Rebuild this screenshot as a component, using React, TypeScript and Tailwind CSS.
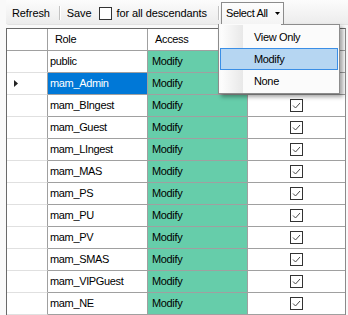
import React from "react";

const rows = [
  "public",
  "mam_Admin",
  "mam_BIngest",
  "mam_Guest",
  "mam_LIngest",
  "mam_MAS",
  "mam_PS",
  "mam_PU",
  "mam_PV",
  "mam_SMAS",
  "mam_VIPGuest",
  "mam_NE",
];

function CheckBox({ checked }: { checked: boolean }) {
  return (
    <div className="shrink-0 w-[13px] h-[13px] border border-[#333333] bg-white flex items-center justify-center">
      {checked && (
        <svg width="11" height="11" viewBox="0 0 11 11">
          <polyline points="2,5.5 4.5,8 9,3" fill="none" stroke="#4a4a4a" strokeWidth="1" />
        </svg>
      )}
    </div>
  );
}

export default function App() {
  return (
    <div
      className="relative w-[348px] h-[315px] overflow-hidden bg-[#f9f9f9] text-[11px] tracking-[-0.35px] text-black whitespace-nowrap"
      style={{ fontFamily: '"Liberation Sans", Arial, sans-serif' }}
    >
      {/* Toolbar */}
      <div className="ml-[6px] h-[25px] flex items-center pt-[2px] bg-gradient-to-b from-[#fcfcfc] to-[#ececec] rounded-bl-[3px] border-b border-[#e2e2e2] tracking-[-0.1px]">
        <span className="shrink-0 ml-[6px]">Refresh</span>
        <div className="shrink-0 ml-[9px] flex h-[14px]">
          <div className="w-px bg-[#c2c2c2]" />
          <div className="w-px bg-white" />
        </div>
        <span className="shrink-0 ml-[6px]">Save</span>
        <div className="shrink-0 ml-[7px]">
          <CheckBox checked={false} />
        </div>
        <span className="shrink-0 ml-[5px]">for all descendants</span>
        <div className="shrink-0 ml-[11px] flex h-[14px]">
          <div className="w-px bg-[#c2c2c2]" />
          <div className="w-px bg-white" />
        </div>
        <div className="shrink-0 ml-px self-end w-[63px] h-[22px] border-l border-t border-r border-[#8c8c8c] bg-gradient-to-b from-[#fdfdfd] to-[#f4f4f4] flex items-center pl-[4px] pr-[3px] pb-[1px] relative z-20 tracking-[-0.35px]">
          <span>Select All</span>
          <svg className="ml-auto" width="5" height="3" viewBox="0 0 5 3">
            <polygon points="0,0 5,0 2.5,3" fill="#000" />
          </svg>
        </div>
      </div>

      {/* Grid */}
      <div className="mt-[3px] ml-[6px] w-[340px] border-l border-t border-r border-l-[#696969] border-t-[#696969] border-r-[#8a8a8a] bg-white">
        {/* Header */}
        <div className="flex h-[22px]">
          <div className="w-[41px] border-r border-b border-[#a0a0a0]" />
          <div className="w-[100px] border-r border-b border-[#a0a0a0] flex items-center pl-[7px]">Role</div>
          <div className="w-[100px] border-r border-b border-[#a0a0a0] flex items-center pl-[7px]">Access</div>
          <div className="w-[97px] border-b border-[#a0a0a0]" />
        </div>
        {rows.map((r, i) => {
          const sel = i === 1;
          return (
            <div key={r} className="flex h-[22px]">
              <div className="w-[41px] border-r border-r-[#a0a0a0] border-b border-b-[#e0e0e0] flex items-center pl-[7px]">
                {sel && (
                  <svg width="5" height="7" viewBox="0 0 5 7">
                    <polygon points="0,0 4,3.5 0,7" fill="#222" />
                  </svg>
                )}
              </div>
              <div
                className={
                  sel
                    ? "w-[100px] border-r border-b border-[#a0a0a0] flex items-center pl-[2px] bg-[#0078d7] text-white"
                    : "w-[100px] border-r border-b border-[#a0a0a0] flex items-center pl-[2px] bg-white"
                }
              >
                {r}
              </div>
              <div className="w-[100px] border-r border-b border-[#a0a0a0] flex items-center pl-[4px] bg-[#66cdaa]">
                Modify
              </div>
              <div className="w-[97px] border-b border-[#a0a0a0] flex items-center justify-center">
                <CheckBox checked={true} />
              </div>
            </div>
          );
        })}
      </div>

      {/* Dropdown menu */}
      <div className="absolute left-[218px] top-[24px] w-[122px] h-[70px] z-10 shadow-[3px_3px_4px_rgba(0,0,0,0.35)] bg-[#fbfbfb] border-l border-r border-b border-[#8c8c8c] flex flex-col">
        <div className="flex h-px">
          <div className="w-[62px]" />
          <div className="flex-1 bg-[#8c8c8c]" />
        </div>
        <div className="relative flex-1 flex flex-col px-px pt-px">
          <div className="absolute left-[2px] top-0 bottom-0 w-[22px] bg-gradient-to-r from-[#fdfdfd] to-[#e8e8e8]" />
          <div className="relative h-[22px] flex items-center pl-[34px]">View Only</div>
          <div className="relative h-[22px] flex items-center pl-[33px] bg-[#b6d6f2] border border-[#3a8ee6]">Modify</div>
          <div className="relative h-[22px] flex items-center pl-[34px]">None</div>
        </div>
      </div>
    </div>
  );
}
